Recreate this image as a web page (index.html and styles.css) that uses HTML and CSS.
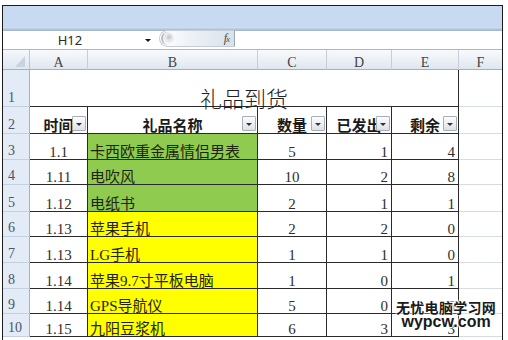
FILE: index.html
```html
<!DOCTYPE html>
<html lang="zh-CN">
<head>
<meta charset="utf-8">
<title>礼品到货</title>
<link rel="stylesheet" href="styles.css">
</head>
<body>
<div class="frame">
  <div class="ribbon"></div>
  <div class="ribbon-edge"></div>
  <div class="fbar">
    <div class="namebox">H12</div>
    <div class="nb-drop"><span class="tri"></span></div>
    <div class="fx-pill"><span class="knob"></span><span class="fx">f<span class="fx-x">x</span></span></div>
    <div class="finput"></div>
  </div>
  <div class="sheet">
    <div class="corner"><span class="corner-tri"></span></div>
    <div class="colh">A</div>
    <div class="colh">B</div>
    <div class="colh">C</div>
    <div class="colh">D</div>
    <div class="colh">E</div>
    <div class="colh last">F</div>

    <div class="rowh">1</div>
    <div class="cell title">礼品到货</div>
    <div class="cell f"></div>

    <div class="rowh">2</div>
    <div class="cell hdr">时间<span class="filter"></span></div>
    <div class="cell hdr">礼品名称<span class="filter"></span></div>
    <div class="cell hdr">数量<span class="filter"></span></div>
    <div class="cell hdr">已发出<span class="filter"></span></div>
    <div class="cell hdr">剩余<span class="filter"></span></div>
    <div class="cell f"></div>

    <div class="rowh">3</div>
    <div class="cell c">1.1</div>
    <div class="cell name green">卡西欧重金属情侣男表</div>
    <div class="cell c">5</div>
    <div class="cell r">1</div>
    <div class="cell r">4</div>
    <div class="cell f"></div>

    <div class="rowh">4</div>
    <div class="cell c">1.11</div>
    <div class="cell name green">电吹风</div>
    <div class="cell c">10</div>
    <div class="cell r">2</div>
    <div class="cell r">8</div>
    <div class="cell f"></div>

    <div class="rowh">5</div>
    <div class="cell c">1.12</div>
    <div class="cell name green">电纸书</div>
    <div class="cell c">2</div>
    <div class="cell r">1</div>
    <div class="cell r">1</div>
    <div class="cell f"></div>

    <div class="rowh">6</div>
    <div class="cell c">1.13</div>
    <div class="cell name yellow">苹果手机</div>
    <div class="cell c">2</div>
    <div class="cell r">2</div>
    <div class="cell r">0</div>
    <div class="cell f"></div>

    <div class="rowh">7</div>
    <div class="cell c">1.13</div>
    <div class="cell name yellow">LG手机</div>
    <div class="cell c">1</div>
    <div class="cell r">1</div>
    <div class="cell r">0</div>
    <div class="cell f"></div>

    <div class="rowh">8</div>
    <div class="cell c">1.14</div>
    <div class="cell name yellow">苹果9.7寸平板电脑</div>
    <div class="cell c">1</div>
    <div class="cell r">0</div>
    <div class="cell r">1</div>
    <div class="cell f"></div>

    <div class="rowh">9</div>
    <div class="cell c">1.14</div>
    <div class="cell name yellow">GPS导航仪</div>
    <div class="cell c">5</div>
    <div class="cell r">0</div>
    <div class="cell r hidden-val">5</div>
    <div class="cell f"></div>

    <div class="rowh">10</div>
    <div class="cell c">1.15</div>
    <div class="cell name yellow">九阳豆浆机</div>
    <div class="cell c">6</div>
    <div class="cell r">3</div>
    <div class="cell r">3</div>
    <div class="cell f"></div>
  </div>
  <div class="watermark">
    <div class="wm-cn">无忧电脑学习网</div>
    <div class="wm-en">wypcw.com</div>
  </div>
</div>
</body>
</html>
```

FILE: styles.css
```css
html, body {
  margin: 0;
  padding: 0;
  background: #fff;
  width: 508px;
  height: 340px;
  overflow: hidden;
}

.frame {
  position: relative;
  margin: 5px 0 0 2px;
  width: 499px;
  height: 340px;
  border: 1px solid #1c1c1c;
  border-bottom: none;
  font-family: "Liberation Serif", "Noto Sans CJK SC", serif;
}

.ribbon {
  height: 21px;
  background: #c7daf1;
}

.ribbon-edge {
  height: 4px;
  background: linear-gradient(#d6e2f0 0, #b7c9de 50%, #9fb3cb 100%);
}

.fbar {
  display: flex;
  height: 18px;
  border-bottom: 1px solid #a9b8ca;
  background: #fff;
}

.namebox {
  width: 134px;
  text-align: center;
  font-family: "Noto Sans", "DejaVu Sans", sans-serif;
  font-size: 13px;
  line-height: 18px;
  color: #2a2a2a;
}

.nb-drop {
  width: 22px;
  display: flex;
  align-items: center;
  justify-content: center;
}

.tri {
  width: 0;
  height: 0;
  border-left: 3px solid transparent;
  border-right: 3px solid transparent;
  border-top: 3px solid #111;
  margin-top: 1px;
}

.fx-pill {
  width: 76px;
  height: 17px;
  margin-top: -1px;
  box-sizing: border-box;
  border: 1px solid #c4ccd8;
  border-right: 1px solid #9aa7b8;
  border-radius: 9px 0 0 9px;
  background: linear-gradient(to right, #ffffff 0, #eef2f7 40%, #d9e1eb 100%);
  display: flex;
  align-items: center;
  justify-content: space-between;
  padding: 0 5px 0 1px;
}

.knob {
  width: 11px;
  height: 13px;
  border-radius: 50%;
  background: radial-gradient(circle at 55% 40%, #c4c4c8 0, #e6e6e9 35%, #f8f8f8 70%);
  border-left: 2px solid #b3bac5;
}

.fx {
  font-family: "Liberation Serif", serif;
  font-style: italic;
  font-size: 12px;
  color: #4a4a4a;
  letter-spacing: -1px;
}

.fx-x {
  font-size: 9px;
}

.finput {
  flex: 1;
}

.sheet {
  display: grid;
  grid-template-columns: 27px 58px 170px 69px 65px 67px 43px;
  grid-template-rows: 20px 37px 27px 26px 25px 27px 25px 26px 26px 25px 23px;
}

.sheet > div {
  box-sizing: border-box;
  position: relative;
}

.corner {
  background: linear-gradient(#f4f7fb, #dfe7f1);
  border-right: 1px solid #b9c6d6;
  border-bottom: 1px solid #9eb2c9;
}

.corner-tri {
  position: absolute;
  right: 4px;
  bottom: 2px;
  width: 0;
  height: 0;
  border-left: 10px solid transparent;
  border-bottom: 11px solid #c9d3df;
}

.colh {
  background: linear-gradient(#f8fafc 0, #edf1f6 50%, #dfe6ee 100%);
  border-right: 1px solid #c5cfdb;
  border-bottom: 1px solid #9eb2c9;
  text-align: center;
  font-size: 14px;
  line-height: 14px;
  padding-top: 6px;
  color: #444;
}

.colh.last {
  border-right: none;
}

.rowh {
  background: #e3ebf6;
  border-right: 1px solid #9eb4cc;
  border-bottom: 1px solid #c2d0e0;
  font-size: 14px;
  line-height: 12px;
  color: #4a5568;
  display: flex;
  align-items: flex-end;
  padding: 0 0 2px 5px;
}

.cell {
  border-right: 1px solid #2a2a2a;
  border-bottom: 1px solid #2a2a2a;
  font-size: 15px;
  line-height: 12px;
  color: #2e2e2e;
  display: flex;
  align-items: flex-end;
  padding: 0 3px 1px 3px;
  white-space: nowrap;
}

.cell.c {
  justify-content: center;
}

.cell.r {
  justify-content: flex-end;
}

.cell.name {
  padding-left: 2px;
  color: #1f2410;
}

.green {
  background: #8fcb4f;
}

.yellow {
  background: #ffff00;
}

.cell.f {
  border-right: none;
  border-bottom: 1px solid #d5dce6;
}

.cell.title {
  grid-column: 2 / 7;
  justify-content: center;
  font-family: "Noto Sans CJK SC", sans-serif;
  font-weight: 300;
  font-size: 22px;
  line-height: 16px;
  color: #222;
  padding-bottom: 1px;
}

.cell.hdr {
  justify-content: center;
  font-family: "Noto Sans CJK SC", sans-serif;
  font-weight: 700;
  font-size: 15px;
  line-height: 14px;
  padding-bottom: 1px;
  color: #1a1a1a;
}

.filter {
  position: absolute;
  right: 1px;
  bottom: 2px;
  width: 14px;
  height: 15px;
  box-sizing: border-box;
  border: 1px solid #a7afbb;
  border-radius: 1px;
  background: linear-gradient(#fcfcfd, #dde1e7);
  display: flex;
  align-items: center;
  justify-content: center;
}

.filter::after {
  content: "";
  width: 0;
  height: 0;
  border-left: 3px solid transparent;
  border-right: 3px solid transparent;
  border-top: 3px solid #333;
  margin-top: 1px;
}

.hidden-val {
  color: #777;
}

.watermark {
  position: absolute;
  left: 393px;
  top: 293px;
  color: #1a1a1a;
  text-shadow: 0 0 2px #fff, 0 0 2px #fff, 0 0 3px #fff, 0 0 3px #fff;
  text-align: center;
}

.wm-cn {
  font-family: "Noto Sans CJK SC", sans-serif;
  font-weight: 700;
  font-size: 14px;
  line-height: 16px;
  letter-spacing: 0.3px;
}

.wm-en {
  font-family: "Liberation Sans", Arial, sans-serif;
  font-weight: 700;
  font-size: 16px;
  line-height: 14px;
}
```
